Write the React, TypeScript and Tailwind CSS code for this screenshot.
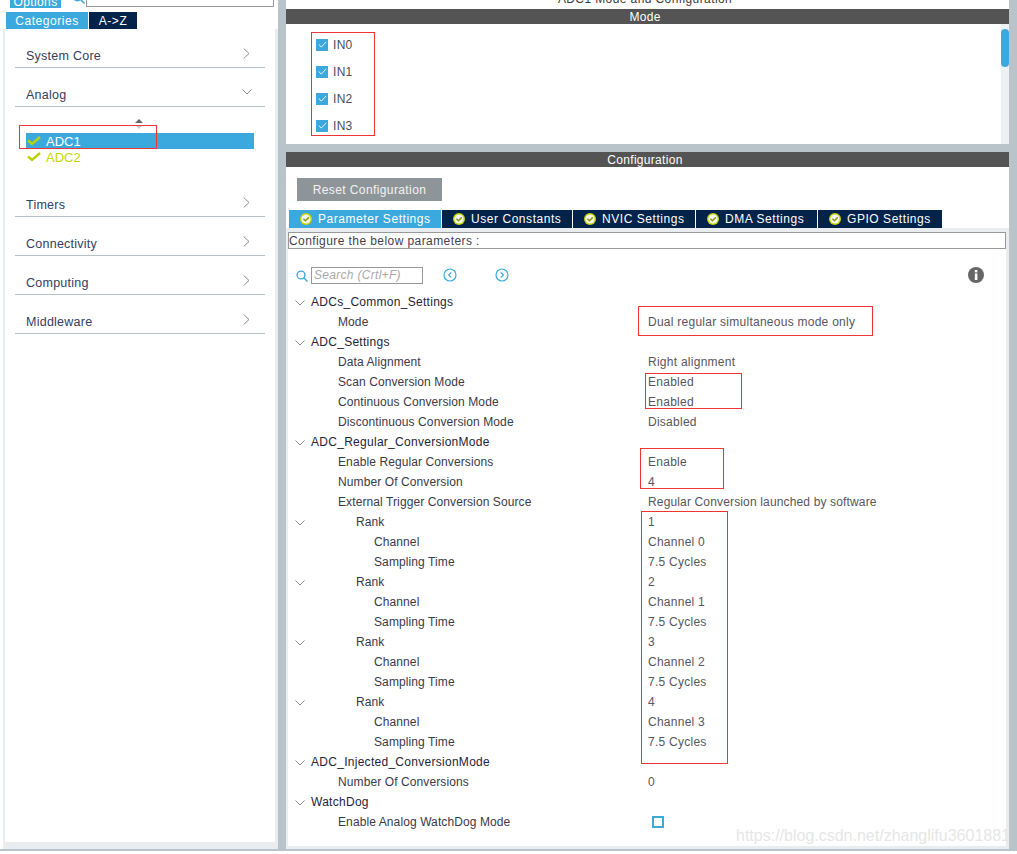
import React from "react";

const font = { fontFamily: '"Liberation Sans", Arial, sans-serif' };

type Row = { label: string; level: 0 | 1 | 2 | 3; chevron?: boolean; value?: string; check?: boolean };

const rows: Row[] = [
  { label: "ADCs_Common_Settings", level: 0, chevron: true },
  { label: "Mode", level: 1, value: "Dual regular simultaneous mode only" },
  { label: "ADC_Settings", level: 0, chevron: true },
  { label: "Data Alignment", level: 1, value: "Right alignment" },
  { label: "Scan Conversion Mode", level: 1, value: "Enabled" },
  { label: "Continuous Conversion Mode", level: 1, value: "Enabled" },
  { label: "Discontinuous Conversion Mode", level: 1, value: "Disabled" },
  { label: "ADC_Regular_ConversionMode", level: 0, chevron: true },
  { label: "Enable Regular Conversions", level: 1, value: "Enable" },
  { label: "Number Of Conversion", level: 1, value: "4" },
  { label: "External Trigger Conversion Source", level: 1, value: "Regular Conversion launched by software" },
  { label: "Rank", level: 2, chevron: true, value: "1" },
  { label: "Channel", level: 3, value: "Channel 0" },
  { label: "Sampling Time", level: 3, value: "7.5 Cycles" },
  { label: "Rank", level: 2, chevron: true, value: "2" },
  { label: "Channel", level: 3, value: "Channel 1" },
  { label: "Sampling Time", level: 3, value: "7.5 Cycles" },
  { label: "Rank", level: 2, chevron: true, value: "3" },
  { label: "Channel", level: 3, value: "Channel 2" },
  { label: "Sampling Time", level: 3, value: "7.5 Cycles" },
  { label: "Rank", level: 2, chevron: true, value: "4" },
  { label: "Channel", level: 3, value: "Channel 3" },
  { label: "Sampling Time", level: 3, value: "7.5 Cycles" },
  { label: "ADC_Injected_ConversionMode", level: 0, chevron: true },
  { label: "Number Of Conversions", level: 1, value: "0" },
  { label: "WatchDog", level: 0, chevron: true },
  { label: "Enable Analog WatchDog Mode", level: 1, check: true },
];

const levelClass: Record<number, string> = {
  0: "pl-[23px] text-[#1d2438] tracking-[0.28px]",
  1: "pl-[50px] text-[#3a3a48] tracking-[0.1px]",
  2: "pl-[68px] text-[#3a3a48] tracking-[0.1px]",
  3: "pl-[86px] text-[#3a3a48] tracking-[0.1px]",
};

function Down({ className }: { className: string }) {
  return (
    <svg viewBox="0 0 10 6" className={className} fill="none" stroke="#8a8a8a" strokeWidth="1">
      <path d="M0.5 0.5 L5 5 L9.5 0.5" />
    </svg>
  );
}

function Right() {
  return (
    <svg viewBox="0 0 7 11" className="w-[7px] h-[11px] mb-[8px]" fill="none" stroke="#8a8a8a" strokeWidth="1">
      <path d="M0.7 0.5 L6 5.5 L0.7 10.5" />
    </svg>
  );
}

function Tick() {
  return (
    <svg viewBox="0 0 14 10" className="w-[14px] h-[10px]" fill="none" stroke="#bed000" strokeWidth="2.4">
      <path d="M1 4.5 L5 8 L13 1" />
    </svg>
  );
}

function Category({ name, open }: { name: string; open?: boolean }) {
  return (
    <div className="h-[39px] mx-[10px] border-b border-[#b9c4ca] flex items-end justify-between pl-[11px] pr-[15px]">
      <span className="text-[12.5px] leading-[15px] mb-[3px] text-[#33405f] tracking-[0.25px]">{name}</span>
      {open ? <Down className="w-[10px] h-[6px] mb-[11px] -mr-[2px]" /> : <Right />}
    </div>
  );
}

function TabIcon() {
  return (
    <svg viewBox="0 0 12 12" className="w-[12px] h-[12px] shrink-0">
      <circle cx="6" cy="6" r="6" fill="#c4d600" />
      <circle cx="6" cy="6" r="4.6" fill="#f4f4f4" />
      <path d="M3.4 5.8 L5.4 7.8 L8.8 4.4" fill="none" stroke="#8a9a10" strokeWidth="1.5" />
    </svg>
  );
}

function Tab({ label, w, active }: { label: string; w: string; active?: boolean }) {
  return (
    <div className={`${w} h-[18px] flex items-center pl-[11px] gap-[6px] text-white text-[12px] tracking-[0.55px] ${active ? "bg-[#3ba9dd]" : "bg-[#03234b]"}`}>
      <TabIcon />
      <span>{label}</span>
    </div>
  );
}

function InRow({ label }: { label: string }) {
  return (
    <div className="h-[27px] flex items-center gap-[5px] pl-[30px]">
      <div className="w-[12px] h-[12px] bg-[#3ba9dd] flex items-center justify-center">
        <svg viewBox="0 0 10 8" className="w-[9px] h-[7px]" fill="none" stroke="#ffffff" strokeWidth="1">
          <path d="M0.8 4 L3.6 7 L9.2 1" />
        </svg>
      </div>
      <span className="text-[12px] text-[#4b4b5c] tracking-[0.3px]">{label}</span>
    </div>
  );
}

function CircleArrow({ left }: { left?: boolean }) {
  return (
    <svg viewBox="0 0 14 14" className="w-[14px] h-[14px]" fill="none" stroke="#3ba9dd">
      <circle cx="7" cy="7" r="6" strokeWidth="1.2" />
      <path d={left ? "M8.3 4.4 L5.6 7 L8.3 9.6" : "M5.7 4.4 L8.4 7 L5.7 9.6"} strokeWidth="1.2" />
    </svg>
  );
}

function SearchIcon({ className }: { className: string }) {
  return (
    <svg viewBox="0 0 12 12" className={className} fill="none" stroke="#3ba9dd" strokeWidth="1.4">
      <circle cx="5" cy="5" r="3.9" />
      <path d="M8 8 L11.5 11.5" />
    </svg>
  );
}

function Red({ className }: { className: string }) {
  return <div className={`absolute border border-[#ee3535] pointer-events-none ${className}`} />;
}

export default function App() {
  return (
    <div className="relative w-[1017px] h-[854px] bg-white overflow-hidden" style={font}>
      <div className="h-[851px] flex">
        {/* Left column */}
        <div className="w-[278px] flex flex-col bg-white border-b-2 border-[#b9c4ca]">
          <div className="h-[12px] flex items-start pl-[10px] overflow-hidden shrink-0">
            <div className="w-[51px] h-[8px] bg-[#3ba9dd] overflow-hidden flex items-end justify-center text-white text-[12px] leading-[14px]">
              <span className="translate-y-[1px] tracking-[0.4px]">Options</span>
            </div>
            <SearchIcon className="w-[13px] h-[13px] ml-[11px] -mt-[9px]" />
            <div className="w-[188px] h-[7px] ml-[1px] border border-t-0 border-[#999]" />
          </div>
          <div className="h-[17px] flex pl-[6px] gap-[1px] text-[12px] tracking-[0.55px] text-white shrink-0">
            <div className="w-[82px] bg-[#3ba9dd] flex items-center justify-center">Categories</div>
            <div className="w-[48px] bg-[#03234b] flex items-center justify-center">A-&gt;Z</div>
          </div>
          <div className="flex-1 ml-[3px] pl-[2px] pr-[3px] pt-[4px] pb-[3px] bg-[#e9edf0]">
            <div className="h-full bg-white">
              <div className="-mt-[4px]">
                <Category name="System Core" />
                <Category name="Analog" open />
                <div className="h-[71px] flex flex-col">
                  <div className="h-[26px] flex justify-center pt-[12px] w-[268px]">
                    <svg viewBox="0 0 10 10" className="w-[10px] h-[10px]">
                      <path d="M5 0 L9 4 L1 4 Z" fill="#666" />
                      <path d="M5 10 L9 6 L1 6 Z" fill="#ccc" />
                    </svg>
                  </div>
                  <div className="w-[228px] h-[16px] bg-[#3ba9dd] flex items-center gap-[5px] pl-[1px] ml-[21px] text-white text-[13px] leading-[18px]">
                    <Tick />
                    <span className="translate-y-[1px]">ADC1</span>
                  </div>
                  <div className="h-[16px] flex items-center gap-[5px] pl-[1px] ml-[21px] text-[#c4d600] text-[13px] leading-[18px]">
                    <Tick />
                    <span className="translate-y-[1px]">ADC2</span>
                  </div>
                </div>
                <Category name="Timers" />
                <Category name="Connectivity" />
                <Category name="Computing" />
                <Category name="Middleware" />
              </div>
            </div>
          </div>
        </div>

        <div className="w-[8px] bg-[#b9c4ca]" />

        {/* Right column */}
        <div className="w-[723px] flex flex-col bg-[#b9c4ca]">
          <div className="h-[9px] bg-white overflow-hidden text-center text-[12px] leading-[14px] text-[#3c3c3c] tracking-[0.4px] pr-[5px] shrink-0">
            <div className="-mt-[8px]">ADC1 Mode and Configuration</div>
          </div>
          <div className="h-[15px] bg-[#535453] text-white text-[12px] leading-[16px] text-center tracking-[0.3px] pr-[5px] shrink-0">Mode</div>
          <div className="h-[120px] bg-white flex shrink-0">
            <div className="flex-1 pt-[7px]">
              <InRow label="IN0" />
              <InRow label="IN1" />
              <InRow label="IN2" />
              <InRow label="IN3" />
            </div>
            <div className="w-[8px] bg-[#eef1f3] pt-[5px]">
              <div className="h-[38px] bg-[#3ba9dd] rounded-[4px]" />
            </div>
          </div>
          <div className="h-[8px] shrink-0" />
          <div className="h-[15px] bg-[#535453] text-white text-[12px] leading-[16px] text-center tracking-[0.3px] pr-[5px] shrink-0">Configuration</div>
          <div className="h-[43px] bg-white shrink-0 pt-[11px] pl-[11px]">
            <div className="w-[145px] h-[23px] bg-[#8e9599] text-[#f2f2f2] text-[12px] tracking-[0.4px] flex items-center justify-center">Reset Configuration</div>
          </div>
          <div className="bg-white flex pl-[3px] gap-[1px] shrink-0">
            <Tab label="Parameter Settings" w="w-[152px]" active />
            <Tab label="User Constants" w="w-[130px]" />
            <Tab label="NVIC Settings" w="w-[122px]" />
            <Tab label="DMA Settings" w="w-[121px]" />
            <Tab label="GPIO Settings" w="w-[124px]" />
          </div>
          <div className="flex-1 mb-[2px] bg-[#e9edf0] pl-[2px] pr-[3px] pt-[4px] pb-[3px]">
            <div className="h-full bg-white">
              <div className="h-[17px] border border-[#999] text-[12px] leading-[16px] text-[#3f3f50] tracking-[0.42px] whitespace-nowrap">Configure the below parameters :</div>
              <div className="h-[43px] flex items-center pl-[8px] pr-[22px] pt-[9px]">
                <SearchIcon className="w-[12px] h-[12px] mt-[1px]" />
                <div className="w-[112px] h-[17px] ml-[3px] border border-[#999] text-[12px] leading-[15px] italic text-[#a9a9a9] pl-[2px] tracking-[0.3px]">Search (Crtl+F)</div>
                <div className="ml-[20px] flex gap-[38px]">
                  <CircleArrow left />
                  <CircleArrow />
                </div>
                <svg viewBox="0 0 16 16" className="w-[16px] h-[16px] ml-auto">
                  <circle cx="8" cy="8" r="8" fill="#666" />
                  <rect x="6.8" y="3" width="2.6" height="2.4" fill="#fff" />
                  <rect x="6.8" y="6.5" width="2.6" height="6.5" fill="#fff" />
                </svg>
              </div>
              <div>
                {rows.map((r, i) => (
                  <div key={i} className="h-[20px] flex items-center relative text-[12px] whitespace-nowrap">
                    {r.chevron && <Down className="absolute left-[7px] top-[8px] w-[10px] h-[6px]" />}
                    <div className={`w-[360px] shrink-0 ${levelClass[r.level]}`}>{r.label}</div>
                    {r.value && (
                      <div className={`text-[#565660] ${r.value.startsWith("Regular") ? "tracking-[0.15px]" : "tracking-[0.26px]"}`}>{r.value}</div>
                    )}
                    {r.check && <div className="ml-[4px] w-[12px] h-[12px] border-2 border-[#3ba9dd]" />}
                  </div>
                ))}
              </div>
            </div>
          </div>
        </div>
        <div className="w-[8px] bg-[#b9c4ca]" />
      </div>

      <Red className="left-[311px] top-[32px] w-[64px] h-[104px]" />
      <Red className="left-[19px] top-[125px] w-[138px] h-[24px]" />
      <Red className="left-[638px] top-[306px] w-[235px] h-[30px]" />
      <Red className="left-[645px] top-[373px] w-[97px] h-[36px]" />
      <Red className="left-[640px] top-[448px] w-[84px] h-[41px]" />
      <Red className="left-[641px] top-[511px] w-[87px] h-[253px]" />
      <div className="absolute left-[736px] top-[825px] text-[16px] leading-[21px] text-[#e6e6e6] whitespace-nowrap">https://blog.csdn.net/zhanglifu3601881</div>
    </div>
  );
}
